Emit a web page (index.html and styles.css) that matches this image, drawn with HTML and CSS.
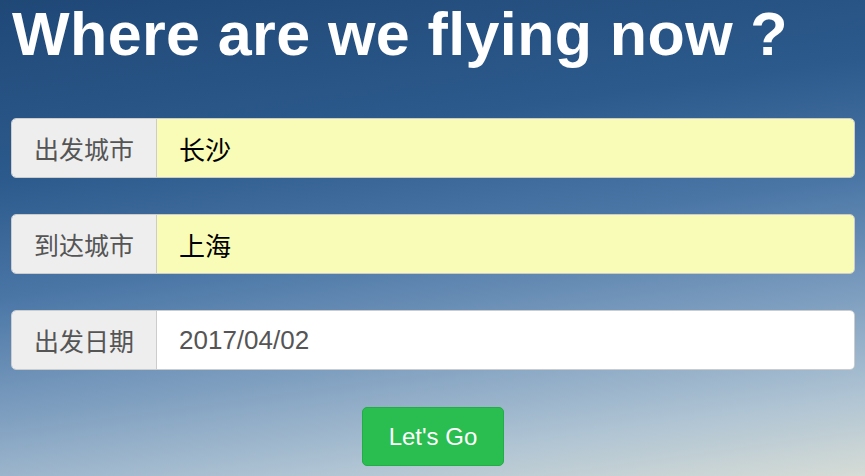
FILE: index.html
```html
<!DOCTYPE html>
<html lang="zh">
<head>
<meta charset="utf-8">
<title>Where are we flying now ?</title>
<link rel="stylesheet" href="styles.css">
</head>
<body>
<div class="page">
  <h1 class="title">Where are we flying now ?</h1>
  <form class="search">
    <div class="group">
      <span class="addon">出发城市</span>
      <input class="field autofill" type="text" value="长沙">
    </div>
    <div class="group">
      <span class="addon">到达城市</span>
      <input class="field autofill" type="text" value="上海">
    </div>
    <div class="group">
      <span class="addon">出发日期</span>
      <input class="field" type="text" value="2017/04/02">
    </div>
    <div class="actions">
      <button class="go" type="button">Let's Go</button>
    </div>
  </form>
</div>
</body>
</html>
```
FILE: styles.css
```css
html, body {
  margin: 0;
  padding: 0;
  height: 100%;
}
body {
  font-family: "Liberation Sans", "Noto Sans CJK SC", sans-serif;
  background: linear-gradient(172deg, #1f4877 0%, #2c5a8c 30%, #4a76a6 50%, #7f9fc0 70%, #aec3d3 86%, #d6dcd6 100%);
  overflow: hidden;
}
.page {
  padding: 0 10px 0 11px;
}
.title {
  margin: 0 0 0 1px;
  font-size: 61px;
  line-height: 68px;
  font-weight: bold;
  color: #fff;
  letter-spacing: 0.4px;
}
.search {
  margin-top: 50px;
  display: flex;
  flex-direction: column;
  gap: 36px;
}
.group {
  display: flex;
  height: 60px;
  box-sizing: border-box;
  border: 1px solid #ccc;
  border-radius: 5px;
  overflow: hidden;
}
.addon {
  width: 144px;
  flex: none;
  display: flex;
  align-items: center;
  justify-content: center;
  background: #eee;
  color: #555;
  font-size: 25px;
  border-right: 1px solid #ccc;
}
.field {
  flex: 1;
  min-width: 0;
  border: none;
  outline: none;
  margin: 0;
  padding: 0 0 0 22px;
  font-family: "Liberation Sans", "Noto Sans CJK SC", sans-serif;
  font-size: 26px;
  color: #555;
  background: #fff;
}
.field.autofill {
  background: #f8fcb6;
  color: #000;
}
.actions {
  display: flex;
  justify-content: center;
  margin-top: 1px;
}
.go {
  width: 142px;
  height: 59px;
  border: 1px solid #23ad45;
  border-radius: 5px;
  background: #2abd4f;
  color: #fff;
  font-family: "Liberation Sans", sans-serif;
  font-size: 24px;
  padding: 0;
}
```
